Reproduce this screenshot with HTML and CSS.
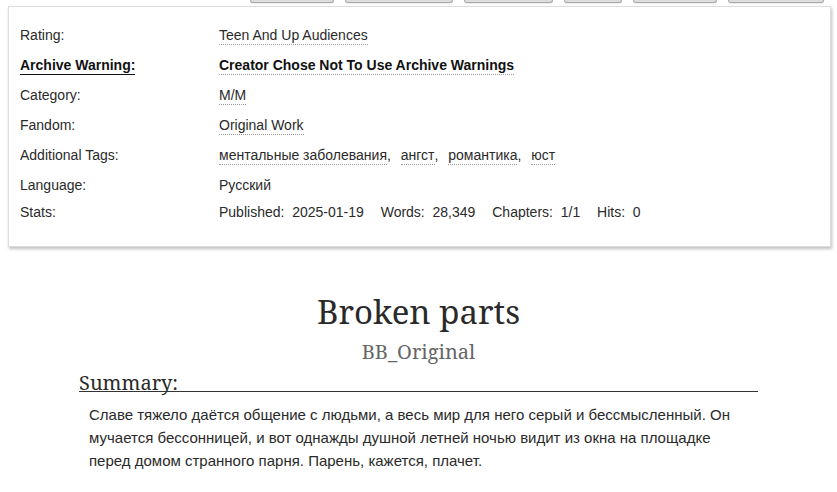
FILE: index.html
```html
<!DOCTYPE html>
<html lang="ru">

<head>
    <meta charset="UTF-8">
    <title>Broken parts</title>
    <link rel="stylesheet" href="styles.css">
</head>

<body>

    <ul class="actions">
        <li class="w82"></li>
        <li class="w106"></li>
        <li class="w87"></li>
        <li class="w56"></li>
        <li class="w82"></li>
        <li class="w94"></li>
    </ul>

    <div class="wrapper">
        <dl class="meta">
            <dt>Rating:</dt>
            <dd><a class="tag" href="#">Teen And Up Audiences</a></dd>

            <dt class="warning"><span>Archive Warning:</span></dt>
            <dd class="warning"><a class="tag" href="#">Creator Chose Not To Use Archive Warnings</a></dd>

            <dt>Category:</dt>
            <dd><a class="tag" href="#">M/M</a></dd>

            <dt>Fandom:</dt>
            <dd><a class="tag" href="#">Original Work</a></dd>

            <dt>Additional Tags:</dt>
            <dd class="tags">
                <a class="tag" href="#">ментальные заболевания</a>,
                <a class="tag" href="#">ангст</a>,
                <a class="tag" href="#">романтика</a>,
                <a class="tag" href="#">юст</a>
            </dd>

            <dt class="short">Language:</dt>
            <dd class="short">Русский</dd>

            <dt class="last">Stats:</dt>
            <dd class="last stats">
                <span>Published:&nbsp; 2025-01-19</span>
                <span>Words:&nbsp; 28,349</span>
                <span>Chapters:&nbsp; 1/1</span>
                <span>Hits:&nbsp; 0</span>
            </dd>
        </dl>
    </div>

    <div class="preface">
        <h2 class="title">Broken parts</h2>
        <h3 class="byline">BB_Original</h3>

        <div class="summary">
            <h3 class="heading">Summary:</h3>
            <blockquote>
                <p>Славе тяжело даётся общение с людьми, а весь мир для него серый и бессмысленный. Он мучается бессонницей, и вот однажды душной летней ночью видит из окна на площадке перед домом странного парня. Парень, кажется, плачет.</p>
            </blockquote>
        </div>
    </div>

</body>

</html>
```

FILE: styles.css
```css
body {
    font-family: 'Liberation Sans', Arial, sans-serif;
    font-size: 14px;
    color: #2a2a2a;
    background-color: #fff;
    margin: 0;
    padding: 0;
}

/* the button row of the header, only its lower edge is on screen */
.actions {
    display: flex;
    justify-content: flex-end;
    gap: 11px;
    list-style: none;
    margin: 0;
    padding: 0 13px 0 0;
    height: 3px;
}

.actions li {
    height: 2px;
    background-color: #ddd;
    border: 1px solid #aaa;
    border-top: none;
    border-radius: 0 0 3px 3px;
    box-shadow: 0 1px 1px rgba(0, 0, 0, 0.08);
}

.w82 { width: 82px; }
.w106 { width: 106px; }
.w87 { width: 87px; }
.w56 { width: 56px; }
.w94 { width: 94px; }

.wrapper {
    margin: 3px 6px 0 8px;
    border: 1px solid #ddd;
    box-shadow: 1px 2px 3px rgba(0, 0, 0, 0.25);
    padding: 18px 11px 24px;
    background-color: #fff;
}

.meta {
    display: grid;
    grid-template-columns: 199px 1fr;
    margin: 0;
}

.meta dt,
.meta dd {
    margin: 0;
    height: 30px;
    line-height: 20px;
}

.meta dt.short,
.meta dd.short {
    height: 27px;
}

.meta dt.last,
.meta dd.last {
    height: 20px;
}

.tag {
    color: #2a2a2a;
    text-decoration: none;
    border-bottom: 1px dotted #999;
    padding-bottom: 1px;
}

.warning,
.warning .tag {
    font-weight: bold;
    color: #111;
}

.meta dt.warning span {
    border-bottom: 1px solid #111;
    padding-bottom: 1px;
}

.tags {
    word-spacing: 6px;
}

.tags .tag {
    word-spacing: normal;
}

.stats span {
    margin-right: 13px;
}

.preface {
    width: 679px;
    margin: 45px auto 0;
}

.title {
    font-family: 'Noto Serif', 'DejaVu Serif Condensed', 'DejaVu Serif', serif;
    font-weight: normal;
    font-size: 33px;
    line-height: 40px;
    text-align: center;
    margin: 0;
    color: #2a2a2a;
}

.byline {
    font-family: 'Noto Serif', 'DejaVu Serif Condensed', 'DejaVu Serif', serif;
    font-weight: normal;
    font-size: 20px;
    line-height: 26px;
    text-align: center;
    margin: 7px 0 0;
    color: #666;
}

.heading {
    font-family: 'Noto Serif', 'DejaVu Serif Condensed', 'DejaVu Serif', serif;
    font-weight: normal;
    font-size: 20px;
    line-height: 17px;
    margin: 9px 0 0;
    border-bottom: 1px solid #333;
    color: #2a2a2a;
}

.summary blockquote {
    margin: 11px 10px 0 10px;
    font-size: 15px;
    line-height: 23px;
}

.summary p {
    margin: 0;
}
```
